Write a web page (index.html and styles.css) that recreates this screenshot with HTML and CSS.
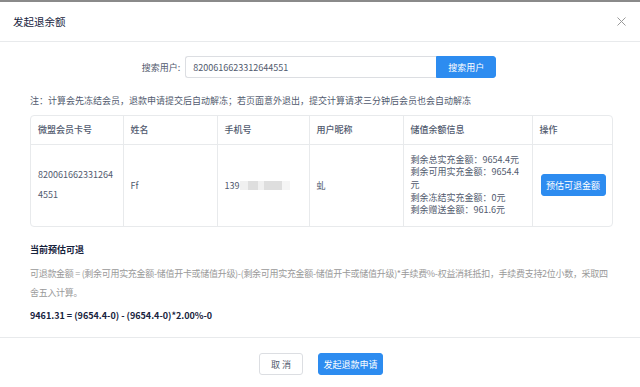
FILE: index.html
```html
<!DOCTYPE html>
<html lang="zh-CN">
<head>
  <meta charset="UTF-8" />
  <meta name="viewport" content="width=device-width, initial-scale=1.0"/>
  <title>发起退余额</title>
  <link rel="stylesheet" href="styles.css">
</head>
<body>
  <div class="modal">
    <div class="modal-header">
      <div class="modal-title">发起退余额</div>
      <span class="modal-close">
        <svg width="9" height="9" viewBox="0 0 9 9">
          <path d="M0.5 0.5 L8.5 8.5 M8.5 0.5 L0.5 8.5" stroke="#999" stroke-width="1" fill="none"/>
        </svg>
      </span>
    </div>

    <div class="modal-body">
      <div class="search-row">
        <label class="search-label">搜索用户:</label>
        <input class="search-input" type="text" value="8200616623312644551" />
        <button class="btn btn-primary btn-search">搜索用户</button>
      </div>

      <div class="note">注：计算会先冻结会员，退款申请提交后自动解冻；若页面意外退出，提交计算请求三分钟后会员也会自动解冻</div>

      <div class="table-wrap">
        <table class="member-table">
          <colgroup>
            <col class="col-card">
            <col class="col-name">
            <col class="col-phone">
            <col class="col-nick">
            <col class="col-balance">
            <col class="col-action">
          </colgroup>
          <thead>
            <tr>
              <th>微盟会员卡号</th>
              <th>姓名</th>
              <th>手机号</th>
              <th>用户昵称</th>
              <th>储值余额信息</th>
              <th>操作</th>
            </tr>
          </thead>
          <tbody>
            <tr>
              <td class="card-no">8200616623312644551</td>
              <td>Ff</td>
              <td>139<span class="blur"></span></td>
              <td>虬</td>
              <td class="balance">
                <div>剩余总实充金额：9654.4元</div>
                <div>剩余可用实充金额：9654.4元</div>
                <div>剩余冻结实充金额：0元</div>
                <div>剩余赠送金额：961.6元</div>
              </td>
              <td><button class="btn btn-primary btn-estimate">预估可退金额</button></td>
            </tr>
          </tbody>
        </table>
      </div>

      <div class="estimate-title">当前预估可退</div>
      <div class="formula">可退款金额 = (剩余可用实充金额-储值开卡或储值升级)-(剩余可用实充金额-储值开卡或储值升级)*手续费%-权益消耗抵扣，手续费支持2位小数，采取四舍五入计算。</div>
      <div class="result">9461.31 = (9654.4-0) - (9654.4-0)*2.00%-0</div>
    </div>

    <div class="modal-footer">
      <button class="btn btn-default">取 消</button>
      <button class="btn btn-primary">发起退款申请</button>
    </div>
  </div>
</body>
</html>
```

FILE: styles.css
```css
:root {
  --primary: #2d8cf0;
  --text: #515a6e;
  --text-dark: #17233d;
  --text-light: #999;
  --border: #e8eaec;
}

* {
  margin: 0;
  padding: 0;
  box-sizing: border-box;
}

body {
  background: #8a8a8a;
  font-family: "Noto Sans CJK SC", "Noto Sans", sans-serif;
  font-size: 9px;
  color: var(--text);
  padding-top: 2px;
  height: 387px;
  overflow: hidden;
}

.modal {
  background: #fff;
  height: 385px;
  display: flex;
  flex-direction: column;
}

.modal-header {
  height: 40px;
  border-bottom: 1px solid var(--border);
  display: flex;
  align-items: center;
  justify-content: space-between;
  padding: 0 14px 0 13px;
}

.modal-title {
  font-size: 10.5px;
  color: var(--text-dark);
}

.modal-close {
  display: flex;
}

.modal-body {
  flex: 1;
  padding: 14px 27px 0 30px;
}

.search-row {
  display: flex;
  justify-content: center;
  align-items: center;
  padding-right: 5px;
}

.search-label {
  color: var(--text);
  margin-right: 5px;
}

.search-input {
  width: 251px;
  height: 22px;
  border: 1px solid #dcdee2;
  border-right: none;
  border-radius: 3px 0 0 3px;
  padding: 0 7px;
  font-family: inherit;
  font-size: 9px;
  color: var(--text);
  outline: none;
}

.btn {
  height: 22px;
  border-radius: 3px;
  font-family: inherit;
  font-size: 9px;
  cursor: pointer;
  border: 1px solid transparent;
}

.btn-primary {
  background: var(--primary);
  border-color: var(--primary);
  color: #fff;
}

.btn-default {
  background: #fff;
  border-color: #dcdee2;
  color: var(--text);
}

.btn-search {
  width: 60px;
  border-radius: 0 3px 3px 0;
}

.note {
  margin-top: 17px;
  line-height: 12px;
}

.table-wrap {
  margin-top: 8px;
  border: 1px solid var(--border);
  border-radius: 4px;
  overflow: hidden;
}

.member-table {
  width: 100%;
  border-collapse: collapse;
  table-layout: fixed;
}

.col-card { width: 92px; }
.col-name { width: 94px; }
.col-phone { width: 92px; }
.col-nick { width: 94px; }
.col-balance { width: 129px; }

.member-table th,
.member-table td {
  text-align: left;
  padding: 0 7px;
  vertical-align: middle;
  border-right: 1px solid var(--border);
}

.member-table th:last-child,
.member-table td:last-child {
  border-right: none;
}

.member-table th {
  height: 28px;
  font-weight: 500;
  color: var(--text);
  border-bottom: 1px solid var(--border);
}

.member-table td {
  height: 82px;
}

.card-no {
  word-break: break-all;
  line-height: 20px;
}

.blur {
  display: inline-block;
  width: 50px;
  height: 9px;
  vertical-align: -1px;
  background: linear-gradient(90deg, #f0f0f0 0, #f0f0f0 8px, #dedede 8px, #dedede 18px, #f0f0f0 18px, #f0f0f0 24px, #dedede 24px, #dedede 42px, #f5f5f5 42px);
}

.balance {
  line-height: 12.6px;
  padding: 10px 8px;
}

.btn-estimate {
  width: 65px;
  margin-left: 1px;
}

.estimate-title {
  margin-top: 17px;
  line-height: 12px;
  font-weight: bold;
  color: var(--text-dark);
}

.formula {
  margin-top: 8px;
  line-height: 19px;
  color: var(--text-light);
  letter-spacing: -0.3px;
}

.result {
  margin-top: 8px;
  line-height: 12px;
  font-weight: bold;
  color: var(--text-dark);
}

.modal-footer {
  height: 50px;
  border-top: 1px solid var(--border);
  display: flex;
  justify-content: center;
  gap: 15px;
  padding: 15px 0 0 2px;
}

.modal-footer .btn-default {
  width: 44px;
}

.modal-footer .btn-primary {
  width: 65px;
}
```
